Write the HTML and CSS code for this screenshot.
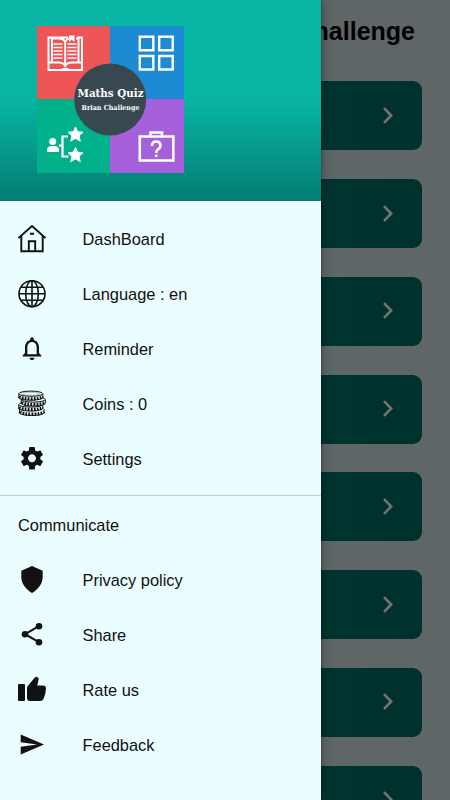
FILE: index.html
```html
<!DOCTYPE html>
<html lang="en">
<head>
<meta charset="utf-8">
<title>Maths Quiz</title>
<link rel="stylesheet" href="styles.css">
</head>
<body>
<main class="screen">
  <h1 class="title">Maths Quiz Challenge</h1>
  <div class="cards" id="cards"></div>
</main>
<aside class="drawer">
  <header class="head">
    <svg class="logo" viewBox="0 0 147 147">
      <path fill="#ed5557" d="M0 0h73v73H0z"/><path fill="#1d8bd4" d="M73 0h74v73H73z"/>
      <path fill="#00b18b" d="M0 73h73v74H0z"/><path fill="#a660dc" d="M73 73h74v74H73z"/>
      <g fill="none" stroke="#fff" stroke-width="2">
        <path d="M31 11.500H11.500V44h33.500V11.500h-5M11.500 36.500h10q5 0 6.700 3.500 1.800-3.500 6.800-3.500h10M28.200 40V16M28.200 15.500q-2-3-6-3h-7.200v24M28.200 15.500q1.500-2.500 4-3M39 12.500h2.500v24M25 43h6.500"/>
        <path stroke-width="1.300" d="M16.500 18h9M16.500 21.500h9M16.500 25h9M16.500 28.500h9M16.500 32h9M30.500 18h9M30.500 21.500h9M30.500 25h9M30.500 28.500h9M30.500 32h9"/>
        <path stroke-width="2.400" d="M102.800 10.700h13.500v13.500h-13.500zM122.200 10.700h13.500v13.500h-13.500zM102.800 30h13.500v13.500h-13.500zM122.200 30h13.500v13.500h-13.500z"/>
        <path d="M22 119.500h4M31 110.500h-5.500v20h6" stroke-width="2.200"/>
        <path stroke-width="2.600" d="M102.800 110.500h33.500v24h-33.500zM113.500 110.500v-4h11.500v4"/>
        <path stroke-width="2.600" d="M115 120q0-4.500 4.200-4.500t4.300 4q0 2.500-2.700 4-1.600 1-1.600 3.500M119.200 128.500v2.500"/>
      </g>
      <g fill="#fff">
        <path d="M32 9.500h5.500v6.500l-2.700-2.200L32 16z"/>
        <circle cx="15.700" cy="115.500" r="3.500"/><path d="M10 126v-2q0-4 5-4h2q5 0 5 4v2z"/>
        <path id="star" stroke="#fff" stroke-linejoin="round" d="m38.500 101 2 4.700 5.500.500-4 3.700 1.300 5.300-4.800-2.800-4.800 2.800 1.300-5.300-4-3.700 5.500-.500z"/>
        <use href="#star" y="20.500"/>
      </g>
      <circle cx="73.200" cy="73.500" r="36" fill="#374850"/>
      <g class="logo-text"><text x="40.500" y="70.500" font-size="10.800" textLength="66" lengthAdjust="spacingAndGlyphs">Maths Quiz</text><text x="44.500" y="83.500" font-size="7" textLength="58" lengthAdjust="spacingAndGlyphs">Brian Challenge</text></g>
    </svg>
  </header>
  <nav class="menu">
    <a class="item"><svg viewBox="0 0 28 28"><g fill="none" stroke="#111" stroke-width="1.900"><path d="M.5 13 14 1l13.500 12M3.300 11v15.200h21.400V11M10.800 26V16.200h6.400V26M12 8.700h4"/></g></svg><span>DashBoard</span></a>
    <a class="item"><svg viewBox="0 0 28 28"><g fill="none" stroke="#111" stroke-width="1.600"><circle cx="14" cy="13.700" r="13"/><ellipse cx="14" cy="13.700" rx="6.300" ry="13"/><path d="M14 1v26M1 13.700h26M3 7.200h22M3 20.300h22"/></g></svg><span>Language : en</span></a>
    <a class="item"><svg viewBox="0 0 24 24"><path d="M12 21.500c1.100 0 2-.900 2-2h-4c0 1.100.900 2 2 2zm6-6v-5c0-3.070-1.630-5.640-4.500-6.320V3.500c0-.830-.670-1.500-1.500-1.500s-1.500.670-1.500 1.500v.680C7.640 4.860 6 7.420 6 10.500v5l-2 2v1h16v-1l-2-2zm-2 1H8v-6c0-2.480 1.510-4.500 4-4.500s4 2.020 4 4.500v6z"/></svg><span>Reminder</span></a>
    <a class="item"><svg viewBox="0 0 28 28"><g class="coins">
      <path d="M1.500 19v3.500c0 4 24.500 4 24.500 0V19"/><path class="ridge" d="M2 21.700c2 3.300 22 3.300 24 0"/>
      <path d="M.8 14.500v3.500c0 4 24 4 24 0v-3.500"/><ellipse cx="12.800" cy="14.500" rx="12" ry="2.600"/><path class="ridge" d="M1.300 17.200c2 3.300 21 3.300 23.500 0"/>
      <path d="M3.300 9.500V13c0 4 24 4 24 0V9.500"/><ellipse cx="15.300" cy="9.500" rx="12" ry="2.600"/><path class="ridge" d="M4 12c2 3.300 21 3.300 23.300 0"/>
      <path d="M.8 3.700v3.500c0 4 24 4 24 0V3.700"/><path class="ridge" d="M1.300 6.400c2 3.300 21 3.300 23.500 0"/><ellipse cx="12.800" cy="3.700" rx="12" ry="2.600"/><ellipse cx="12.800" cy="3.700" rx="9" ry="1.500" stroke-width=".3"/></g></svg><span>Coins : 0</span></a>
    <a class="item"><svg viewBox="0 0 24 24"><path transform="translate(0 -.7)" d="M19.140 12.940c.040-.300.060-.610.060-.940 0-.320-.020-.640-.070-.940l2.030-1.580c.180-.140.230-.410.120-.610l-1.920-3.320c-.120-.220-.370-.290-.590-.220l-2.390.960c-.500-.380-1.030-.700-1.620-.940l-.360-2.540c-.040-.240-.240-.410-.480-.410h-3.840c-.240 0-.430.170-.470.410l-.360 2.540c-.590.240-1.130.570-1.620.940l-2.390-.960c-.220-.080-.470 0-.590.220L2.740 8.870c-.120.210-.080.470.120.610l2.030 1.580c-.050.300-.090.630-.090.940s.020.640.070.940l-2.030 1.580c-.180.140-.230.410-.120.610l1.920 3.320c.120.220.370.290.590.220l2.390-.960c.500.380 1.030.700 1.620.940l.360 2.540c.050.240.240.410.480.410h3.840c.240 0 .440-.170.470-.410l.360-2.540c.590-.240 1.130-.560 1.620-.940l2.390.960c.220.080.470 0 .590-.220l1.920-3.320c.120-.220.070-.470-.120-.610l-2.010-1.580zM12 15.400c-1.900 0-3.400-1.500-3.400-3.400s1.500-3.400 3.400-3.400 3.400 1.500 3.400 3.400-1.500 3.400-3.400 3.400z"/></svg><span>Settings</span></a>
  </nav>
  <nav class="menu more">
    <h2 class="group">Communicate</h2>
    <a class="item"><svg viewBox="0 0 28 28"><path d="M14 0 24.700 4.700v6.500c0 6.300-5 12.500-10.700 15.800C8.300 23.700 3.300 17.500 3.300 11.200V4.700z"/></svg><span>Privacy policy</span></a>
    <a class="item"><svg viewBox="0 0 28 28"><path d="M21 5.200 7 13.200l14 8" fill="none" stroke="#111" stroke-width="2.100"/><circle cx="21" cy="5.200" r="3.300"/><circle cx="7" cy="13.200" r="3.300"/><circle cx="21" cy="21.200" r="3.300"/></svg><span>Share</span></a>
    <a class="item"><svg viewBox="0 0 28 28"><path d="M1 8h5q1 0 1 1v15q0 1-1 1H1q-1 0-1-1V9q0-1 1-1zM9 12q0-1 .8-2l7-8.500q1.200-1.300 2.600-.500 1.600 1 1.200 2.800L19.200 9.500H25q3 0 3 3-.3 6-2.500 10.500-1 2-3 2H12q-3 0-3-3z"/></svg><span>Rate us</span></a>
    <a class="item"><svg viewBox="0 0 28 28"><path d="M2.700 23.500 26 13.500 2.700 3.500v7.800l16.500 2.200-16.500 2.200z"/></svg><span>Feedback</span></a>
  </nav>
</aside>
<script>
const card = '<div class="card"><svg viewBox="0 0 12 18"><path d="m2 1.200 7.200 7.300L2 15.900"/></svg></div>';
document.getElementById('cards').innerHTML = card.repeat(8);
</script>
</body>
</html>
```
FILE: styles.css
```css
* { box-sizing: border-box; }
body {
  margin: 0;
  height: 800px;
  overflow: hidden;
  position: relative;
  background: #5e6667;
  font-family: "Liberation Sans", Arial, sans-serif;
  color: #111;
}
.screen { height: 800px; overflow: hidden; padding: 0 28px; }
.title {
  margin: 0;
  height: 81.300px;
  padding: 17px 7px 0 0;
  font-size: 25px;
  line-height: 29px;
  text-align: right;
  white-space: nowrap;
  color: #000;
}
.cards { display: grid; gap: 28.750px; }
.card {
  height: 69px;
  border-radius: 9px;
  background: linear-gradient(90deg, #003f38, #00312c);
  display: flex;
  align-items: center;
  justify-content: flex-end;
  padding-right: 28px;
}
.card svg { width: 12px; height: 18px; }
.card path { fill: none; stroke: #777171; stroke-width: 2.600; }
.drawer {
  position: absolute;
  inset: 0 auto 0 0;
  width: 321.300px;
  background: #eafdff;
  box-shadow: 0 0 12px rgba(0, 0, 0, .3), 0 0 2px rgba(0, 0, 0, .5);
}
.head {
  height: 201px;
  padding: 26.300px 0 0 36.500px;
  background: linear-gradient(#08b4a4 0, #08b4a4 50%, #037d72 100%);
}
.logo { display: block; width: 147px; height: 147px; }
.logo-text { fill: #fff; font-family: "DejaVu Serif", serif; font-weight: 700; }
.menu { padding: 10px 18px 9px; }
.item {
  display: flex;
  align-items: center;
  gap: 36.500px;
  height: 55.100px;
  font-size: 16.400px;
}
.item svg { width: 28px; height: 28px; fill: #111; flex: none; }
.item span { padding-top: 1px; }
.coins { fill: #eafdff; stroke: #111; stroke-width: 1; }
.coins .ridge { fill: none; stroke-dasharray: 1.700 1.300; stroke-width: 3.200; }
.more { border-top: 1px solid #c0d0d1; padding-top: 0; }
.group { margin: 0; height: 56px; line-height: 59px; font-size: 16.400px; font-weight: 400; }
```
